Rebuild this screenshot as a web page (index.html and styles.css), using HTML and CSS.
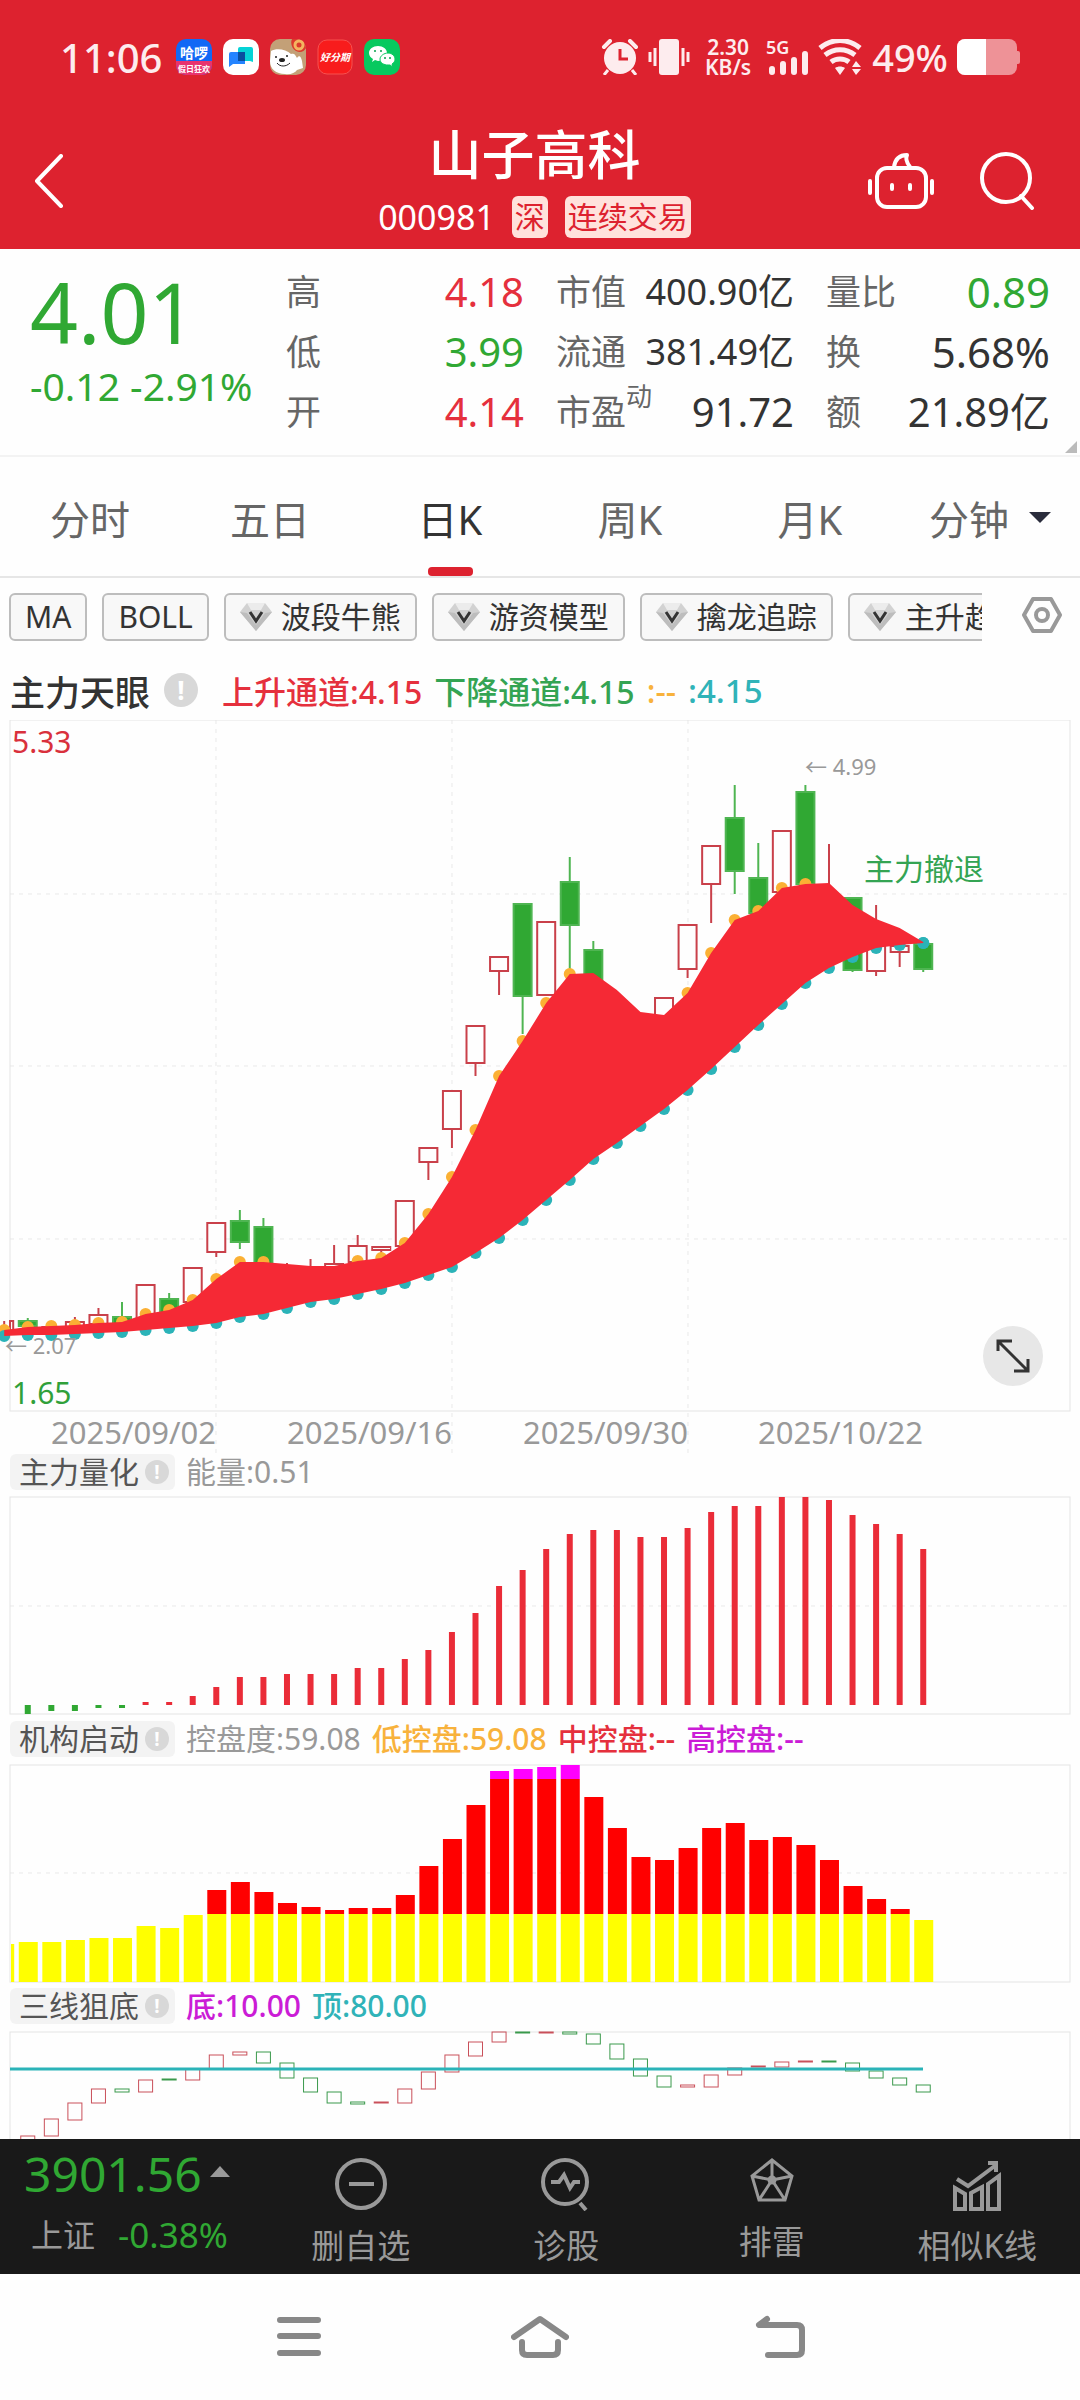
FILE: index.html
```html
<!DOCTYPE html>
<html lang="zh-CN">
  <head>
    <meta charset="UTF-8" />
    <meta name="viewport" content="width=device-width, initial-scale=1.0" />
    <title>山子高科 000981</title>
    <link rel="stylesheet" href="styles.css">
  </head>
  <body>
    <div class="app">
      <header class="header">
        <div class="status-bar">
          <span class="clock">11:06</span>
          <div class="app-icons">
            <svg class="app-icon" viewBox="0 0 36 36">
              <rect width="36" height="36" rx="10" fill="#1268f5" />
              <path d="M0 22h36v4a10 10 0 0 1-10 10H10A10 10 0 0 1 0 26z" fill="#e8336f" />
              <text x="18" y="19" class="app-icon-text">哈啰</text>
              <text x="18" y="33" class="app-icon-text small">假日狂欢</text>
            </svg>
            <svg class="app-icon" viewBox="0 0 36 36">
              <rect width="36" height="36" rx="10" fill="#fff" />
              <path d="M17 8h11a2 2 0 0 1 2 2v13l-3-1H15V10a2 2 0 0 1 2-2z" fill="#05d3d6" />
              <path d="M8 13h14v12H10l-4 3V15a2 2 0 0 1 2-2z" fill="#2484ff" />
              <rect x="15" y="13" width="7" height="9" fill="#0a4f9e" />
            </svg>
            <svg class="app-icon" viewBox="0 0 36 36">
              <rect width="36" height="36" rx="10" fill="#c3a077" />
              <path d="M1 12c5-3 15-2 20 3 3-1 4 0 6 4 2-3 4-2 5 3l1 7-6 2c-2 3-7 5-12 4C6 35 0 30 0 22z" fill="#fff" />
              <path d="M22 0h4a10 10 0 0 1 10 9c-2 4-6 5-10 3s-6-8-4-12z" fill="#dc3a2c" />
              <circle cx="29" cy="6" r="4" fill="none" stroke="#f4b460" stroke-width="3" />
              <circle cx="6" cy="18" r="1" fill="#222" />
              <circle cx="17" cy="17" r="1" fill="#222" />
              <ellipse cx="12" cy="21" rx="3" ry="2" fill="#222" />
              <path d="M7 24c3 4 9 4 13 0" fill="none" stroke="#222" />
            </svg>
            <svg class="app-icon" viewBox="0 0 36 36">
              <rect x="1" y="1" width="34" height="34" rx="9" fill="#f81c1c" stroke="#f8514f" />
              <text x="18" y="22" class="app-icon-text slanted">好分期</text>
            </svg>
            <svg class="app-icon" viewBox="0 0 36 36">
              <rect width="36" height="36" rx="10" fill="#07c95f" />
              <path d="M14 7c5 0 9 3 9 7s-4 8-9 8l-3-1-3 2 1-3c-2-1-4-3-4-6 0-4 4-7 9-7z" fill="#fff" />
              <path d="M24 14c4 0 7 3 7 6 0 2-1 4-3 5l1 3-3-2h-2c-4 0-8-2-8-6 0-3 4-6 8-6z" fill="#fff" stroke="#07c95f" />
              <g fill="#07a04c">
                <circle cx="11" cy="12" r="1" /><circle cx="17" cy="12" r="1" />
                <circle cx="21" cy="19" r="1" /><circle cx="26" cy="19" r="1" />
              </g>
            </svg>
          </div>
          <div class="status-right">
            <svg class="alarm" viewBox="0 0 38 36">
              <circle cx="19" cy="19" r="16" fill="#fdecee" />
              <path d="M3 8l6-6M35 8l-6-6" stroke="#fdecee" stroke-width="4" stroke-linecap="round" />
              <path d="M7 31l-4 5M31 31l4 5" stroke="#fdecee" stroke-width="3" />
              <path d="M19 10v10h8" fill="none" stroke="#dd222f" stroke-width="3" />
            </svg>
            <svg class="vibrate" viewBox="0 0 42 36">
              <rect x="11" width="20" height="36" rx="3" fill="#fdecee" />
              <path d="M2 13v10M7 9v18M35 9v18M40 13v10" stroke="#fdecee" stroke-width="3" />
            </svg>
            <div class="net-speed"><span>2.30</span><span>KB/s</span></div>
            <svg class="signal" viewBox="0 0 43 42">
              <text x="0" y="18" class="signal-text">5G</text>
              <path d="M6 33v3M17 28v8M28 24v12M39 18v18" stroke="#fdecee" stroke-width="6" stroke-linecap="round" />
            </svg>
            <svg class="wifi" viewBox="0 0 45 36">
              <path d="M2 9c12-10 28-10 40 0M7 16c9-7 21-7 30 0M13 23c5-4 13-4 18 0" fill="none" stroke="#fdecee" stroke-width="5" />
              <path d="M17 29c3-2 7-2 10 0l-5 7zM34 28l4-6 5 6zM34 30h9l-5 6z" fill="#fdecee" />
            </svg>
            <span class="battery-text">49%</span>
            <svg class="battery" viewBox="0 0 63 36">
              <rect width="60" height="36" rx="8" fill="#ee9297" />
              <rect x="58" y="12" width="5" height="13" rx="2" fill="#ee9297" />
              <path d="M8 0h21v36H8a8 8 0 0 1-8-8V8a8 8 0 0 1 8-8z" fill="#fff" />
            </svg>
          </div>
        </div>

        <div class="title-bar">
          <button class="icon-button back" aria-label="返回">
            <svg viewBox="0 0 30 54" width="30" height="54">
              <path d="M27 2L3 27l24 25" class="line" />
            </svg>
          </button>
          <div class="stock-title">
            <h1>山子高科</h1>
            <div class="stock-code">
              <span>000981</span>
              <span class="tag">深</span>
              <span class="tag">连续交易</span>
            </div>
          </div>
          <div class="title-actions">
            <button class="icon-button" aria-label="智能助手">
              <svg viewBox="0 0 66 58" width="66" height="58">
                <rect x="9" y="16" width="49" height="39" rx="10" class="line" />
                <path d="M26 15c1-7 5-12 13-12-2 4 0 8 3 12M2 29v12M64 29v12M24 33v4M42 33v4" class="line" />
              </svg>
            </button>
            <button class="icon-button" aria-label="搜索">
              <svg viewBox="0 0 56 58" width="56" height="58">
                <circle cx="27" cy="26" r="24" class="line" />
                <path d="M42 44l11 12" class="line" />
              </svg>
            </button>
          </div>
        </div>
      </header>

      <section class="quote">
        <div class="price down">
          <strong>4.01</strong>
          <span>-0.12 -2.91%</span>
        </div>
        <dl class="stats">
          <div><dt>高</dt><dd class="up">4.18</dd></div>
          <div><dt>低</dt><dd class="down">3.99</dd></div>
          <div><dt>开</dt><dd class="up">4.14</dd></div>
        </dl>
        <dl class="stats">
          <div><dt>市值</dt><dd class="long">400.90亿</dd></div>
          <div><dt>流通</dt><dd class="long">381.49亿</dd></div>
          <div><dt>市盈<sup>动</sup></dt><dd>91.72</dd></div>
        </dl>
        <dl class="stats">
          <div><dt>量比</dt><dd class="short down">0.89</dd></div>
          <div><dt>换</dt><dd class="short">5.68%</dd></div>
          <div><dt>额</dt><dd>21.89亿</dd></div>
        </dl>
      </section>

      <nav class="tabs">
        <a href="#" class="tab">分时</a>
        <a href="#" class="tab">五日</a>
        <a href="#" class="tab active">日K</a>
        <a href="#" class="tab">周K</a>
        <a href="#" class="tab">月K</a>
        <a href="#" class="tab">分钟<span class="caret"></span></a>
      </nav>

      <main class="charts">
        <div class="indicators">
          <div class="chips">
            <button class="chip">MA</button>
            <button class="chip">BOLL</button>
            <button class="chip"><svg class="gem" viewBox="0 0 32 28"><use href="#gem" /></svg>波段牛熊</button>
            <button class="chip"><svg class="gem" viewBox="0 0 32 28"><use href="#gem" /></svg>游资模型</button>
            <button class="chip"><svg class="gem" viewBox="0 0 32 28"><use href="#gem" /></svg>擒龙追踪</button>
            <button class="chip"><svg class="gem" viewBox="0 0 32 28"><use href="#gem" /></svg>主升趋势</button>
          </div>
          <button class="icon-button" aria-label="指标设置">
            <svg viewBox="0 0 40 36" width="40" height="36">
              <path d="M11 2h18l9 16-9 16H11L2 18z" fill="none" stroke="#999" stroke-width="4" stroke-linejoin="round" />
              <circle cx="20" cy="18" r="6" fill="none" stroke="#999" stroke-width="4" />
            </svg>
          </button>
        </div>

        <div class="main-legend">
          <h2>主力天眼</h2>
          <span class="info">!</span>
          <span class="up">上升通道:4.15</span>
          <span class="green">下降通道:4.15</span>
          <span class="orange">:--</span>
          <span class="teal">:4.15</span>
        </div>

        <div class="main-chart">
          <svg class="chart" viewBox="0 0 1080 734">
            <path class="grid" d="M10 174H1070M10 346H1070M10 519H1070" />
            <path class="grid" d="M216 0V734M452 0V734M688 0V734" />
            <rect class="frame" x="10" y="0" width="1060" height="691" />
            <g id="candles"></g>
            <g id="channel"></g>
            <text x="12" y="33" class="axis up-text">5.33</text>
            <text x="12" y="684" class="axis down-text">1.65</text>
            <text x="5" y="634" class="note">← 2.07</text>
            <text x="805" y="55" class="note">← 4.99</text>
            <text x="864" y="160" class="axis signal-label">主力撤退</text>
            <text x="216" y="724" class="axis date">2025/09/02</text>
            <text x="452" y="724" class="axis date">2025/09/16</text>
            <text x="688" y="724" class="axis date">2025/09/30</text>
            <text x="923" y="724" class="axis date">2025/10/22</text>
          </svg>
          <button class="expand" aria-label="全屏">
            <svg viewBox="0 0 34 34" width="34" height="34">
              <path d="M2 12V2h14M2 2l30 30M18 32h14V20" fill="none" stroke="#333" stroke-width="3" />
            </svg>
          </button>
        </div>

        <div class="sub-legend">
          <button class="pill">主力量化<span class="info">!</span></button>
          <span>能量:0.51</span>
        </div>
        <svg class="chart" viewBox="0 0 1080 231">
          <path class="grid" d="M10 116H1070" />
          <rect class="frame" x="10" y="7" width="1060" height="217" />
          <g id="energy"></g>
        </svg>

        <div class="sub-legend">
          <button class="pill">机构启动<span class="info">!</span></button>
          <span>控盘度:59.08</span>
          <span class="orange">低控盘:59.08</span>
          <span class="up">中控盘:--</span>
          <span class="purple">高控盘:--</span>
        </div>
        <svg class="chart" viewBox="0 0 1080 231">
          <path class="grid" d="M10 116H1070" />
          <rect class="frame" x="10" y="8" width="1060" height="217" />
          <g id="control"></g>
        </svg>

        <div class="sub-legend">
          <button class="pill">三线狙底<span class="info">!</span></button>
          <span class="purple">底:10.00</span>
          <span class="teal">顶:80.00</span>
        </div>
        <svg class="chart" viewBox="0 0 1080 231">
          <rect class="frame" x="10" y="8" width="1060" height="217" />
          <g id="bottom-line"></g>
          <path d="M10 45H923" stroke="#2bb3b8" stroke-width="3" />
        </svg>
      </main>

      <footer class="bottom-bar">
        <button class="index-quote">
          <span class="index-value">3901.56<i></i></span>
          <span class="index-change"><span>上证</span><span class="down">-0.38%</span></span>
        </button>
        <button class="action">
          <svg viewBox="0 0 54 54" width="54" height="54">
            <circle cx="27" cy="27" r="24" /><path d="M15 27h25" />
          </svg>
          删自选
        </button>
        <button class="action">
          <svg viewBox="0 0 54 54" width="54" height="54">
            <circle cx="26" cy="25" r="22" />
            <path d="M12 25h8l5-7 6 13 4-6h6M41 46l6 7" />
          </svg>
          诊股
        </button>
        <button class="action risk">
          <svg viewBox="0 0 54 46" width="54" height="46">
            <path d="M27 3L47 19 40 43H14L7 19zM27 3v20L7 19M27 23l20-4M27 23L14 43M27 23l13 20" />
            <circle cx="27" cy="23" r="3" />
          </svg>
          排雷
        </button>
        <button class="action">
          <svg viewBox="0 0 54 54" width="54" height="54">
            <path d="M5 31l10 6v15H5zM21 36l11-6v22H21zM38 27l11-8v33H38z" />
            <path d="M7 22l11 7L46 8M38 6h8v9" />
          </svg>
          相似K线
        </button>
      </footer>

      <nav class="system-nav">
        <button aria-label="最近任务">
          <svg viewBox="0 0 58 44" width="58" height="44">
            <path d="M9 5h38M9 21h38M9 38h38" />
          </svg>
        </button>
        <button aria-label="主页">
          <svg viewBox="0 0 58 44" width="58" height="44">
            <path d="M3 22L29 4l26 18M11 27v8q0 5 5 5h26q5 0 5-5v-8" />
          </svg>
        </button>
        <button aria-label="后退">
          <svg viewBox="0 0 58 44" width="58" height="44">
            <path d="M16 4l-8 6h38q5 0 5 5v20q0 5-5 5H17" />
          </svg>
        </button>
      </nav>
    </div>

    <svg class="defs" width="0" height="0">
      <defs>
        <g id="gem">
          <path d="M7 0h18l7 9-16 19L0 9z" fill="#d2d2d2" />
          <path d="M7 0h18l-4 7H11z" fill="#ececec" />
          <path d="M0 9l16 19L32 9l-7 1-9 12-9-12z" fill="#bdbdbd" />
          <path d="M10 9l6 9 6-9" fill="none" stroke="#333" stroke-width="3" />
        </g>
      </defs>
    </svg>
    <script src="script.js"></script>
  </body>
</html>
```
FILE: styles.css
```css
* {
  box-sizing: border-box;
}

body {
  margin: 0;
  font-family: "Noto Sans", "Noto Sans CJK SC", sans-serif;
  color: #333;
  background-color: #fefefe;
}

h1,
h2,
dl,
dd {
  margin: 0;
}

button {
  padding: 0;
  border: none;
  background: none;
  color: inherit;
  font-family: inherit;
  cursor: pointer;
}

svg {
  display: block;
  flex: none;
}

.app {
  height: 100vh;
  display: flex;
  flex-direction: column;
}

/* Colors */
.up {
  color: #e5303d;
}

.down {
  color: #30a833;
}

.green {
  color: #34a453;
}

.orange {
  color: #f8b23c;
}

.teal {
  color: #30b3b8;
}

.purple {
  color: #cb1cd6;
}

/* Header */
.header {
  flex: none;
  height: 249px;
  background-color: #dd222f;
  color: white;
}

.status-bar {
  height: 114px;
  padding: 0 60px;
  display: flex;
  align-items: center;
}

.clock {
  width: 116px;
  font-size: 40px;
  font-weight: 500;
  color: #fdecee;
}

.app-icons {
  display: flex;
  gap: 11px;
}

.app-icon {
  width: 36px;
  height: 36px;
}

.app-icon-text {
  fill: white;
  font-size: 14px;
  font-weight: bold;
  text-anchor: middle;
}

.app-icon-text.small {
  font-size: 8px;
}

.app-icon-text.slanted {
  font-size: 10px;
  font-style: italic;
}

.status-right {
  margin-left: auto;
  display: flex;
  align-items: center;
  gap: 9px;
  color: #fdecee;
}

.alarm {
  width: 38px;
}

.vibrate {
  width: 42px;
}

.net-speed {
  margin: 0 6px;
  display: flex;
  flex-direction: column;
  align-items: center;
  font-size: 21px;
  font-weight: 600;
  line-height: 20px;
}

.signal {
  width: 43px;
}

.signal-text {
  fill: #fdecee;
  font-size: 18px;
  font-weight: 600;
}

.wifi {
  width: 45px;
}

.battery-text {
  font-size: 38px;
  font-weight: 500;
}

.battery {
  width: 63px;
}

.title-bar {
  display: grid;
  grid-template-columns: 1fr auto 1fr;
  align-items: center;
  padding: 0 45px 0 34px;
}

.line {
  fill: none;
  stroke: white;
  stroke-width: 4;
  stroke-linecap: round;
  stroke-linejoin: round;
}

.back,
.title-actions {
  padding-top: 10px;
}

.back {
  justify-self: start;
}

.stock-title {
  text-align: center;
}

.stock-title h1 {
  font-size: 53px;
  font-weight: 500;
  line-height: 82px;
}

.stock-code {
  display: flex;
  align-items: center;
  justify-content: center;
  gap: 17px;
  font-size: 34px;
  line-height: 42px;
}

.tag {
  padding: 0 3px;
  border-radius: 6px;
  background-color: #ffe2dc;
  color: #dd222f;
  font-size: 30px;
}

.title-actions {
  display: flex;
  justify-content: flex-end;
  gap: 45px;
}

/* Quote */
.quote {
  position: relative;
  flex: none;
  height: 208px;
  padding: 13px 30px 0 30px;
  display: flex;
  border-bottom: 2px solid #f3f3f3;
}

.quote::after {
  content: "";
  position: absolute;
  right: 3px;
  bottom: 2px;
  border-left: 12px solid transparent;
  border-bottom: 12px solid #bbb;
}

.price {
  flex: 1;
  display: flex;
  flex-direction: column;
  white-space: nowrap;
}

.price strong {
  font-size: 84px;
  font-weight: 400;
  line-height: 100px;
}

.price span {
  font-size: 39px;
  line-height: 48px;
}

.stats {
  width: 238px;
  margin-right: 32px;
}

.stats:last-child {
  width: 224px;
  margin-right: 0;
}

.stats div {
  display: flex;
  justify-content: space-between;
  line-height: 60px;
  white-space: nowrap;
}

.stats dt {
  position: relative;
  font-size: 35px;
  color: #666;
}

.stats sup {
  position: absolute;
  top: -16px;
  left: 100%;
  font-size: 26px;
  line-height: 60px;
}

.stats dd {
  font-size: 40px;
}

.stats dd.long {
  font-size: 36px;
}

.stats dd.short {
  font-size: 42px;
}

/* Tabs */
.tabs {
  flex: none;
  height: 121px;
  display: grid;
  grid-template-columns: repeat(6, 1fr);
  border-bottom: 2px solid #e6e6e6;
}

.tab {
  position: relative;
  display: flex;
  align-items: center;
  justify-content: center;
  padding-top: 2px;
  font-size: 40px;
  color: #666;
  text-decoration: none;
}

.tab.active {
  color: #333;
}

.tab.active::after {
  content: "";
  position: absolute;
  bottom: 0;
  width: 45px;
  height: 9px;
  border-radius: 4px;
  background-color: #dd222f;
}

.caret {
  margin-left: 20px;
  border: 11px solid transparent;
  border-top-color: #2a2c3c;
  border-bottom: none;
}

/* Indicators */
.charts {
  flex: 1;
  min-height: 0;
  overflow: hidden;
}

.indicators {
  height: 86px;
  padding: 15px 18px 0 9px;
  display: flex;
  align-items: flex-start;
  justify-content: space-between;
  gap: 40px;
}

.indicators .icon-button {
  padding-top: 4px;
}

.chips {
  flex: 1;
  min-width: 0;
  overflow: hidden;
  display: flex;
  gap: 15px;
}

.chip {
  flex: none;
  height: 48px;
  padding: 0 14px;
  display: flex;
  align-items: center;
  border: 2px solid #bdbdbd;
  border-radius: 6px;
  background-color: #f8f8f8;
  font-size: 30px;
  line-height: 44px;
}

.gem {
  width: 32px;
  height: 28px;
  margin-right: 9px;
}

.info {
  width: 34px;
  height: 34px;
  border-radius: 50%;
  background-color: #d8d8d8;
  color: white;
  font-size: 26px;
  font-weight: bold;
  line-height: 34px;
  text-align: center;
}

.main-legend {
  height: 56px;
  padding: 0 10px 4px;
  display: flex;
  align-items: center;
  gap: 8px;
  font-size: 32px;
  font-weight: 500;
}

.main-legend h2 {
  font-size: 35px;
  font-weight: 500;
}

.main-legend .info {
  margin: 0 16px 0 6px;
}

.main-legend .green {
  padding: 0 4px;
}

.main-legend .teal {
  padding-left: 4px;
  font-size: 33px;
}

/* Charts */
.main-chart {
  position: relative;
}

.chart {
  width: 100%;
  height: auto;
}

.grid {
  fill: none;
  stroke: #e9e9e9;
  stroke-width: 1;
  stroke-dasharray: 4 5;
}

.frame {
  fill: none;
  stroke: #e4e4e4;
  stroke-width: 1;
}

.axis {
  font-size: 30px;
}

.up-text {
  fill: #d9303c;
}

.down-text {
  fill: #30a03a;
}

.signal-label {
  fill: #34a453;
}

.date {
  fill: #999;
  font-size: 31px;
  text-anchor: end;
}

.note {
  fill: #999;
  font-size: 22px;
}

.candle-up {
  fill: #fefefe;
  stroke: #c9404a;
  stroke-width: 2;
}

.candle-down {
  fill: #30a833;
  stroke: #4fb552;
  stroke-width: 2;
}

.hollow-up {
  fill: none;
  stroke: #c9505a;
}

.hollow-down {
  fill: none;
  stroke: #3a994c;
}

.expand {
  position: absolute;
  right: 37px;
  bottom: 68px;
  width: 60px;
  height: 60px;
  padding: 13px;
  border-radius: 50%;
  background-color: #e7e7e7;
}

.sub-legend {
  height: 36px;
  padding: 0 10px;
  display: flex;
  align-items: center;
  gap: 11px;
  font-size: 30px;
  line-height: 36px;
  color: #999;
}

.sub-legend .up,
.sub-legend .orange,
.sub-legend .teal,
.sub-legend .purple {
  font-weight: 500;
}

.pill {
  height: 36px;
  padding: 0 6px 0 9px;
  display: flex;
  align-items: center;
  gap: 6px;
  border-radius: 6px;
  background-color: #f3f3f3;
  color: #555;
  font-size: 30px;
  line-height: 36px;
}

.pill .info {
  width: 24px;
  height: 24px;
  font-size: 19px;
  line-height: 24px;
}

/* Bottom bar */
.bottom-bar {
  flex: none;
  height: 135px;
  display: grid;
  grid-template-columns: 258px repeat(4, 1fr);
  background-color: #191919;
  color: #999;
}

.index-quote {
  padding: 5px 0 0 24px;
  text-align: left;
  display: flex;
  flex-direction: column;
}

.index-value {
  display: flex;
  align-items: center;
  color: #30a833;
  font-size: 48px;
  line-height: 60px;
}

.index-value i {
  margin: 0 0 6px 8px;
  border: 10px solid transparent;
  border-top: none;
  border-bottom: 11px solid #999;
}

.index-change {
  padding-left: 7px;
  display: flex;
  gap: 23px;
  font-size: 32px;
  line-height: 62px;
}

.index-change .down {
  font-size: 35px;
}

.action {
  display: flex;
  flex-direction: column;
  align-items: center;
  padding-top: 18px;
  font-size: 33px;
  line-height: 70px;
}

.action svg {
  fill: none;
  stroke: #999;
  stroke-width: 4;
}

.action.risk svg {
  stroke-width: 3;
  margin-bottom: 4px;
}

/* System navigation */
.system-nav {
  flex: none;
  height: 126px;
  padding: 0 180px;
  display: grid;
  grid-template-columns: repeat(3, 1fr);
}

.system-nav button {
  display: flex;
  align-items: center;
  justify-content: center;
}

.system-nav svg {
  fill: none;
  stroke: #888;
  stroke-width: 6;
  stroke-linecap: round;
  stroke-linejoin: round;
}

.defs {
  position: absolute;
}
```
FILE: script.js
```js
const STEP = 23.565;
const START = 4.2;
const LEFT = 11;

const x = (i) => START + i * STEP;

// [direction, high, body top, body bottom, low]
const candles = [
  ["up", 601, 601, 611, 611], ["down", 598, 601, 606, 606],
  ["up", 607, 607, 610, 610], ["up", 597, 602, 608, 608],
  ["up", 588, 595, 604, 604], ["down", 582, 597, 605, 605],
  ["up", 565, 565, 600, 600], ["down", 573, 579, 593, 593],
  ["up", 548, 548, 582, 582], ["up", 503, 503, 532, 537],
  ["down", 490, 501, 522, 529], ["down", 498, 507, 545, 545],
  ["up", 543, 546, 549, 549], ["up", 539, 547, 550, 550],
  ["up", 525, 544, 548, 548], ["up", 515, 526, 542, 542],
  ["up", 527, 527, 530, 533], ["up", 481, 481, 526, 526],
  ["up", 428, 428, 442, 460], ["up", 371, 371, 409, 428],
  ["up", 306, 306, 343, 356], ["up", 237, 237, 251, 275],
  ["down", 183, 184, 276, 314], ["up", 202, 202, 275, 275],
  ["down", 137, 162, 205, 251], ["down", 221, 230, 261, 261],
  ["down", 290, 290, 300, 300], ["down", 305, 305, 315, 315],
  ["up", 278, 278, 298, 298], ["up", 205, 205, 249, 258],
  ["up", 126, 126, 164, 203], ["down", 65, 98, 151, 174],
  ["down", 123, 158, 193, 193], ["up", 111, 111, 172, 172],
  ["down", 65, 72, 164, 164], ["up", 124, 180, 200, 200],
  ["down", 178, 178, 250, 252], ["up", 185, 225, 251, 256],
  ["up", 219, 226, 232, 247], ["down", 224, 224, 249, 252],
];

const upper = [
  610, 607, 606, 605, 603, 602, 594, 590, 580, 559, 542, 542, 544, 546, 546,
  541, 538, 523, 494, 457, 410, 356, 321, 283, 254, 253, 270, 292, 295, 273,
  233, 200, 191, 168, 164, 163, 185, 199, 208, 222,
];

const lower = [
  616, 615, 615, 614, 613, 612, 610, 608, 606, 603, 597, 594, 588, 582, 579,
  574, 569, 563, 555, 547, 533, 518, 500, 480, 460, 439, 423, 406, 389, 370,
  349, 327, 305, 284, 263, 248, 237, 228, 225, 223,
];

const energy = [
  0, -9, -6, -6, -3, -3, 3, 3, 9, 18, 28, 28, 31, 31, 31, 37, 37, 46, 55, 73,
  92, 119, 135, 156, 171, 175, 175, 168, 168, 177, 193, 199, 199, 208, 208,
  205, 190, 181, 171, 156,
];

const control = [
  38, 40, 40, 42, 44, 44, 56, 54, 67, 92, 100, 90, 79, 75, 72, 74, 74, 87, 116,
  143, 177, 211, 213, 215, 217, 185, 154, 125, 122, 134, 154, 159, 142, 145,
  137, 122, 96, 83, 73, 62,
];

// [direction, top, bottom], starting at the second day
const threeLine = [
  ["up", 104, 121], ["up", 87, 104], ["up", 71, 88], ["up", 57, 71],
  ["down", 57, 60], ["up", 48, 60], ["down", 47, 48], ["up", 37, 48],
  ["up", 23, 37], ["up", 20, 23], ["down", 20, 31], ["down", 31, 46],
  ["down", 46, 60], ["down", 60, 71], ["down", 70, 72], ["up", 70, 71],
  ["up", 57, 71], ["up", 40, 57], ["up", 23, 40], ["up", 10, 24],
  ["up", 0, 10], ["down", 0, 0], ["up", 0, 0], ["down", 0, 2],
  ["down", 2, 12], ["down", 12, 27], ["down", 27, 44], ["down", 44, 55],
  ["up", 53, 55], ["up", 43, 55], ["up", 36, 43], ["up", 34, 35],
  ["up", 30, 35], ["up", 29, 30], ["down", 29, 30], ["down", 31, 39],
  ["down", 39, 46], ["down", 46, 53], ["down", 53, 60],
];

function rect(left, top, width, height, attrs) {
  return `<rect x="${left}" y="${top}" width="${width}" height="${height}" ${attrs} />`;
}

function renderCandles() {
  return candles
    .map(([dir, high, top, bottom, low], i) => {
      const left = Math.max(x(i) - 9, LEFT - 1);
      return `<g class="candle-${dir}">
        <path d="M${x(i)} ${high}V${low}" />
        ${rect(left, top, x(i) + 9 - left, bottom - top, "")}
      </g>`;
    })
    .join("");
}

function renderChannel() {
  const hasOrange = (i) => i < 12 || (i > 14 && i < 25) || (i > 28 && i < 35);
  const dot = (i, y, color) => `<circle cx="${x(i)}" cy="${y}" r="6" fill="${color}" />`;
  const top = upper.map((y, i) => `${x(i)},${y}`);
  const bottom = lower.map((y, i) => `${x(i)},${y}`);
  const last = lower.length - 1;

  return (
    upper.map((y, i) => (hasOrange(i) ? dot(i, y, "#fbb034") : "")).join("") +
    lower.map((y, i) => dot(i, y, "#2bb3b8")).join("") +
    dot(last, lower[last], "#2bb3b8") +
    `<polygon points="${top.concat(bottom.reverse()).join(" ")}" fill="#f52935" />`
  );
}

function renderEnergy() {
  return energy
    .map((v, i) =>
      rect(x(i) - 3, v > 0 ? 215 - v : 215, 6, Math.abs(v), `fill="${v > 0 ? "#ea2c38" : "#30a833"}"`)
    )
    .join("");
}

function renderControl() {
  const base = 225;
  return control
    .map((v, i) => {
      const left = Math.max(x(i) - 9, LEFT);
      const width = x(i) + 10 - left;
      const low = Math.min(v, 68);
      let bars = rect(left, base - low, width, low, 'fill="#ffff00"');
      if (v > 68) {
        const mid = Math.min(v, 203);
        bars += rect(left, base - mid, width, mid - 68, 'fill="#ff0000"');
      }
      if (v > 203) {
        bars += rect(left, base - v, width, v - 203, 'fill="#ff00ff"');
      }
      return bars;
    })
    .join("");
}

function renderThreeLine() {
  return threeLine
    .map(([dir, top, bottom], i) =>
      rect(x(i + 1) - 7, top + 8, 14, Math.max(bottom - top, 1), `class="hollow-${dir}"`)
    )
    .join("");
}

document.getElementById("candles").innerHTML = renderCandles();
document.getElementById("channel").innerHTML = renderChannel();
document.getElementById("energy").innerHTML = renderEnergy();
document.getElementById("control").innerHTML = renderControl();
document.getElementById("bottom-line").innerHTML = renderThreeLine();
```
